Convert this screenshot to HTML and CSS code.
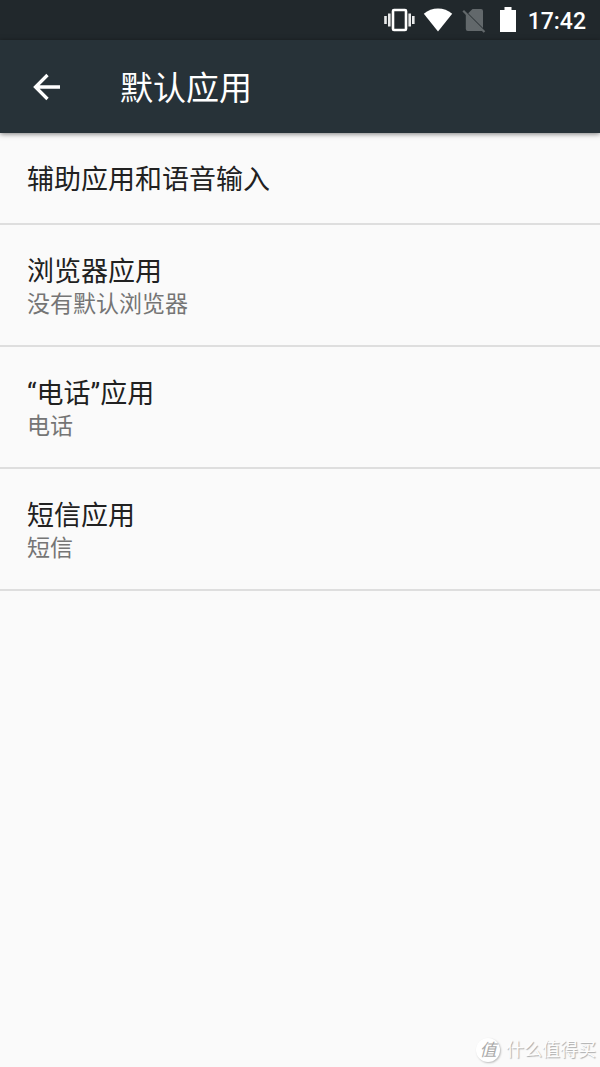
FILE: index.html
```html
<!DOCTYPE html>
<html lang="zh-CN">
<head>
<meta charset="utf-8">
<meta name="viewport" content="width=device-width, initial-scale=1">
<title>默认应用</title>
<link rel="stylesheet" href="styles.css">
</head>
<body>
<div class="status-bar">
  <svg class="icon-vibrate" width="32" height="28" viewBox="0 0 32 28" aria-hidden="true">
    <rect x="10" y="4" width="13" height="20" rx="1" fill="none" stroke="#fff" stroke-width="2.600"/>
    <path d="M6.300 7.500v13M26.700 7.500v13" stroke="#fff" stroke-width="2.600" opacity=".9"/>
    <path d="M2.500 10v8M30.300 10v8" stroke="#fff" stroke-width="2.600" opacity=".9"/>
  </svg>
  <svg class="icon-wifi" width="30" height="28" viewBox="0 0 30 28" aria-hidden="true">
    <path d="M15 25.500.8 7.800C5 4.400 9.700 2.500 15 2.500s10 1.900 14.200 5.300z" fill="#fff"/>
  </svg>
  <svg class="icon-sim" width="24" height="28" viewBox="0 0 24 28" aria-hidden="true">
    <path d="M10.500 3h8.500q2 0 2 2V22L6.200 7.300zM3.800 7.600 20.800 24.400Q20.500 25 19 25H5.800q-2 0-2-2z" fill="#62686b"/>
    <path d="M1.200 4.800 22.500 26" stroke="#62686b" stroke-width="2.200"/>
  </svg>
  <svg class="icon-battery" width="16" height="28" viewBox="0 0 16 28" aria-hidden="true">
    <path d="M4.500 1h7v3H16v22H0V4h4.500z" fill="#fff"/>
  </svg>
  <time class="clock">17:42</time>
</div>
<header class="toolbar">
  <button class="back" type="button" aria-label="返回">
    <svg width="28" height="28" viewBox="0 0 28 28" aria-hidden="true">
      <path d="M28 14H4M15.500 2 3.500 14l12 12" fill="none" stroke="#fff" stroke-width="3.300"/>
    </svg>
  </button>
  <h1 class="heading">默认应用</h1>
</header>
<main class="content">
  <ul class="list">
    <li><a class="row" href="#assist"><span class="title">辅助应用和语音输入</span></a></li>
    <li><a class="row" href="#browser"><span class="title">浏览器应用</span><span class="summary">没有默认浏览器</span></a></li>
    <li><a class="row" href="#phone"><span class="title">“电话”应用</span><span class="summary">电话</span></a></li>
    <li><a class="row" href="#sms"><span class="title">短信应用</span><span class="summary">短信</span></a></li>
  </ul>
</main>
<footer class="watermark">
  <span class="seal">值</span>
  <span>什么值得买</span>
</footer>
</body>
</html>
```
FILE: styles.css
```css
* {
  box-sizing: border-box;
}

body {
  margin: 0;
  min-height: 100vh;
  display: flex;
  flex-direction: column;
  background: #fafafa;
  color: #212121;
  font-family: Roboto, "Noto Sans CJK SC", sans-serif;
}

.status-bar {
  display: flex;
  align-items: center;
  justify-content: flex-end;
  height: 40px;
  padding-right: 14px;
  background: #21282c;
  color: #fff;
}

.icon-wifi {
  margin-left: 8px;
}

.icon-sim {
  margin-left: 9px;
}

.icon-battery {
  margin-left: 14px;
}

.clock {
  margin-left: 12px;
  padding-top: 4px;
  font-size: 23px;
  font-weight: 500;
  line-height: 28px;
}

.toolbar {
  display: flex;
  align-items: center;
  gap: 60px;
  height: 93px;
  padding: 0 32px;
  background: #273238;
  color: #fff;
  box-shadow: 0 1px 5px rgba(0, 0, 0, 0.5);
}

.back {
  display: flex;
  padding: 0;
  border: 0;
  background: none;
}

.heading {
  margin: 0;
  padding-top: 4px;
  font-size: 33px;
  font-weight: 400;
  line-height: 48px;
}

.content {
  flex: 1;
}

.list {
  margin: 0;
  padding: 0;
  list-style: none;
}

.row {
  display: flex;
  flex-direction: column;
  padding: 29px 27px 25px;
  border-bottom: 2px solid #dedede;
  color: inherit;
  text-decoration: none;
}

.title {
  font-size: 27px;
  line-height: 36px;
}

.summary {
  color: #757575;
  font-size: 23px;
  line-height: 30px;
}

.watermark {
  display: flex;
  align-items: center;
  justify-content: flex-end;
  gap: 6px;
  padding: 0 4px 4px 0;
  color: #fdfdfd;
  font-size: 18px;
  line-height: 26px;
  text-shadow: 1px 1px 1px #aaa;
}

.seal {
  width: 24px;
  height: 24px;
  border-radius: 50%;
  background: #fff;
  box-shadow: 1px 1px 2px #bbb;
  color: #aaa;
  font-size: 17px;
  font-style: italic;
  line-height: 24px;
  text-align: center;
  text-shadow: none;
}
```
